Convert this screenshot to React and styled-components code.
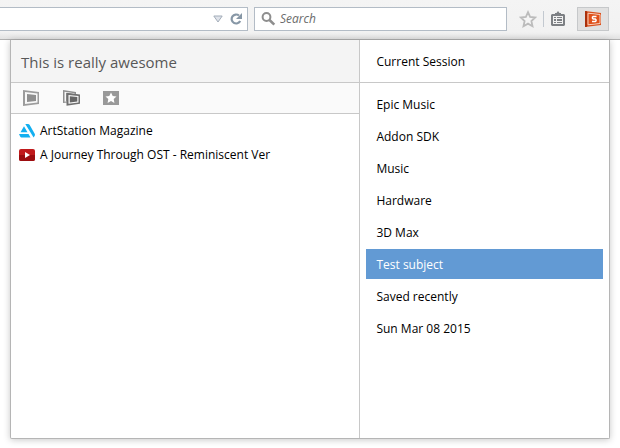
import React, { useState } from "react";
import styled, { createGlobalStyle } from "styled-components";

const GlobalStyle = createGlobalStyle`
  *, *::before, *::after { box-sizing: border-box; }
  body {
    margin: 0;
    background: #fff;
    color: #000;
    font: 12px/16px "Open Sans", "Noto Sans", sans-serif;
  }
  button, input { font: inherit; color: inherit; }
  svg { display: block; flex: none; }
`;

const Page = styled.div`
  display: flex;
  flex-direction: column;
  min-height: 100vh;
`;

const BrowserBar = styled.header`
  display: flex;
  align-items: center;
  height: 40px;
  padding: 0 11px 2px 0;
  background: linear-gradient(#f4f4f4 0, #f2f2f2 32px, #e2e2e2 39px);
  border-bottom: 1px solid #b0b0b0;
`;

const Field = styled.div`
  display: flex;
  align-items: center;
  height: 24px;
  background: #fff;
  border: 1px solid #b3bcc6;
`;

const AddressField = styled(Field)`
  flex: 245 1 0;
  min-width: 0;
  border-left: 0;
  padding-right: 2px;
`;

const SearchField = styled(Field)`
  flex: 239 1 0;
  min-width: 0;
  margin: 0 12px 0 6px;
  padding: 0 6px;
  gap: 4px;
`;

const TextInput = styled.input`
  flex: 1;
  min-width: 0;
  height: 22px;
  padding: 0;
  border: 0;
  outline: 0;
  background: transparent;
  &::placeholder { color: #6b6b6b; font-style: italic; opacity: 1; }
`;

const IconButton = styled.button`
  display: flex;
  align-items: center;
  justify-content: center;
  flex: none;
  width: ${(p) => p.$width || 18}px;
  height: 20px;
  padding: 0;
  border: 0;
  background: transparent;
`;

const ActiveButton = styled(IconButton)`
  height: 24px;
  margin-left: 10px;
  background: #e1e1e1;
  border: 1px solid #c6c8ca;
`;

const Separator = styled.span`
  width: 1px;
  height: 16px;
  margin: 0 5px 0 6px;
  background: #c3c9d0;
`;

const Panel = styled.main`
  display: flex;
  flex: 1;
  margin: 0 10px 9px;
  background: #fff;
  border: 1px solid #b5b5b5;
  border-top: 0;
  border-radius: 0 0 2px 2px;
  box-shadow: 0 1px 7px rgba(0, 0, 0, 0.22);
`;

const TabsPane = styled.section`
  flex: 349 1 0;
  min-width: 0;
  border-right: 1px solid #c8c8c8;
`;

const SessionsPane = styled.nav`
  flex: 249 1 0;
  min-width: 0;
`;

const SessionTitle = styled.h1`
  height: 43px;
  margin: 0;
  padding: 0 10px;
  font-size: 15px;
  font-weight: 400;
  line-height: 44px;
  color: #585858;
  background: #f4f4f4;
  border-bottom: 1px solid #c8c8c8;
`;

const ActionBar = styled.div`
  display: flex;
  align-items: center;
  gap: 22px;
  height: 31px;
  padding: 0 11px;
  background: #fafafa;
  border-bottom: 1px solid #c8c8c8;
`;

const TabList = styled.ul`
  margin: 0;
  padding: 5px 8px;
  list-style: none;
`;

const TabLink = styled.a`
  display: flex;
  align-items: center;
  gap: 5px;
  height: 24px;
  color: #000;
  text-decoration: none;
  white-space: nowrap;
`;

const CurrentSession = styled.div`
  display: flex;
  height: 43px;
  padding: 6px;
  border-bottom: 1px solid #c8c8c8;
`;

const SessionList = styled.div`
  display: flex;
  flex-direction: column;
  gap: 2px;
  padding: 6px;
`;

const SessionButton = styled.button`
  width: 100%;
  height: 30px;
  padding: 2px 10px 0;
  border: 0;
  text-align: left;
  color: ${(p) => (p.$selected ? "#fff" : "#000")};
  background: ${(p) => (p.$selected ? "#629ad4" : "transparent")};
`;

const DropIcon = () => (
  <svg width="10" height="8" viewBox="0 0 10 8">
    <path d="M.8 1h8.400L5 7z" fill="#dfe3ea" stroke="#a3adb9" />
  </svg>
);

const ReloadIcon = () => (
  <svg width="12" height="12" viewBox="0 0 12 12">
    <path d="M9 2.500A4.500 4.500 0 1 0 10.200 8" fill="none" stroke="#8797a6" strokeWidth="2.200" />
    <path d="M12 0v6H6z" fill="#8797a6" />
  </svg>
);

const SearchIcon = () => (
  <svg width="15" height="14" viewBox="0 0 15 14">
    <circle cx="5.500" cy="5" r="3.900" fill="none" stroke="#8e8e8e" strokeWidth="2" />
    <path d="M8.500 8l4.800 4.600" stroke="#8e8e8e" strokeWidth="2.600" />
  </svg>
);

const StarIcon = () => (
  <svg width="18" height="18" viewBox="0 0 18 18">
    <path d="M9 2.200l2.100 4.700 5.100.6-3.800 3.500 1.100 5.200L9 13.600l-4.500 2.600 1.100-5.200-3.800-3.500 5.100-.6z" fill="#f5f5f5" stroke="#bcbcbc" strokeWidth="1.800" />
  </svg>
);

const ClipboardIcon = () => (
  <svg width="14" height="15" viewBox="0 0 14 15">
    <path d="M4 2h1.500L7 0l1.500 2H10v1h3l1 1v10l-1 1H1l-1-1V4l1-1h3z" fill="#7d8084" />
    <path d="M2 5h10v8H2z" fill="#f1f1f1" />
    <path d="M3 6h2v1H3zm3 0h5v1H6zM3 8h2v2H3zm3 0h5v2H6zM3 11h2v1H3zm3 0h5v1H6z" fill="#7d8084" />
  </svg>
);

const SessionIcon = () => (
  <svg width="16" height="16" viewBox="0 0 16 16">
    <path d="M0 0l16 2v12L0 16z" fill="#d94f1c" />
    <path d="M0 0l2 .3v15.400L0 16z" fill="#a9300c" />
    <path d="M3 2.200l12 1.300v9L3 13.800z" fill="none" stroke="#f9d3bf" strokeWidth="1" />
    <path d="M4 3.300l10 1v7.400l-10 1z" fill="#e0501a" />
    <path d="M11.500 5.500H8.200l-.7.6v1.200l.7.7h2.100l.7.700v1.200l-.7.600H7" fill="none" stroke="#fff" strokeWidth="1.500" />
  </svg>
);

const WindowIcon = () => (
  <svg width="18" height="16" viewBox="0 0 18 16">
    <path d="M1 0l16 2v12L1 16z" fill="#9c9c9c" />
    <path d="M3 2l12.500 1.500v9L3 14z" fill="#f8f8f8" />
    <path d="M5 4l9 1v6l-9 1z" fill="#8f8f8f" />
  </svg>
);

const WindowsIcon = () => (
  <svg width="18" height="16" viewBox="0 0 18 16">
    <path d="M1 0l13 2v9.500L1 13z" fill="#8f8f8f" />
    <path d="M2.500 1.800l10 1.400v7.300l-10 1.200z" fill="#f8f8f8" />
    <path d="M4 3l8 1v6l-8 1z" fill="#999" />
    <path d="M4.500 2.800L18 4.500v9.300L4.500 15.800z" fill="#707070" />
    <path d="M6.500 5l10 1v6.500l-10 1.200z" fill="#f8f8f8" />
    <path d="M7.800 6.300l7.500.7v4.500l-7.500.9z" fill="#666" />
  </svg>
);

const FavoriteIcon = () => (
  <svg width="18" height="16" viewBox="0 0 18 16">
    <path d="M1 1h16v14H1z" fill="#999" />
    <path d="M9 2.500l1.700 3.500 3.800.5-2.800 2.600.7 3.800L9 11.100l-3.400 1.800.7-3.800-2.800-2.600 3.800-.5z" fill="#fff" />
  </svg>
);

const ArtStationIcon = () => (
  <svg width="16" height="14" viewBox="0 0 16 14">
    <path d="M0 10h9.500l2 3.500H3c-1 0-1.600-.5-2-1.300zM5 2.200L8.500 8.300H1.500zM6.300 0H9c.8 0 1.300.4 1.700 1l5 8.800c.4.800.3 1.400 0 2l-1.100 1.700z" fill="#13aff0" />
  </svg>
);

const VideoIcon = () => (
  <svg width="16" height="12" viewBox="0 0 16 12">
    <rect width="16" height="12" rx="2" fill="#c01a1c" />
    <path d="M0 6h16v4a2 2 0 0 1-2 2H2a2 2 0 0 1-2-2z" fill="#9c0d10" />
    <path d="M6 3l5 3-5 3z" fill="#fff" />
  </svg>
);

const tabs = [
  { title: "ArtStation Magazine", Icon: ArtStationIcon },
  { title: "A Journey Through OST - Reminiscent Ver", Icon: VideoIcon },
];

const sessions = [
  "Epic Music",
  "Addon SDK",
  "Music",
  "Hardware",
  "3D Max",
  "Test subject",
  "Saved recently",
  "Sun Mar 08 2015",
];

export default function App() {
  const [selected, setSelected] = useState("Test subject");
  return (
    <Page>
      <GlobalStyle />
      <BrowserBar>
        <AddressField>
          <TextInput aria-label="Address" />
          <IconButton aria-label="Show history"><DropIcon /></IconButton>
          <IconButton aria-label="Reload"><ReloadIcon /></IconButton>
        </AddressField>
        <SearchField>
          <SearchIcon />
          <TextInput type="search" aria-label="Search" placeholder="Search" />
        </SearchField>
        <IconButton aria-label="Bookmark this page"><StarIcon /></IconButton>
        <Separator />
        <IconButton aria-label="Bookmarks"><ClipboardIcon /></IconButton>
        <ActiveButton $width={32} aria-label="Sessions"><SessionIcon /></ActiveButton>
      </BrowserBar>
      <Panel>
        <TabsPane>
          <SessionTitle>This is really awesome</SessionTitle>
          <ActionBar>
            <IconButton aria-label="Open in this window"><WindowIcon /></IconButton>
            <IconButton aria-label="Open in new window"><WindowsIcon /></IconButton>
            <IconButton aria-label="Add to favorites"><FavoriteIcon /></IconButton>
          </ActionBar>
          <TabList>
            {tabs.map(({ title, Icon }) => (
              <li key={title}>
                <TabLink href="#"><Icon />{title}</TabLink>
              </li>
            ))}
          </TabList>
        </TabsPane>
        <SessionsPane aria-label="Sessions">
          <CurrentSession>
            <SessionButton onClick={() => setSelected("")}>Current Session</SessionButton>
          </CurrentSession>
          <SessionList>
            {sessions.map((name) => (
              <SessionButton key={name} $selected={name === selected} onClick={() => setSelected(name)}>
                {name}
              </SessionButton>
            ))}
          </SessionList>
        </SessionsPane>
      </Panel>
    </Page>
  );
}
